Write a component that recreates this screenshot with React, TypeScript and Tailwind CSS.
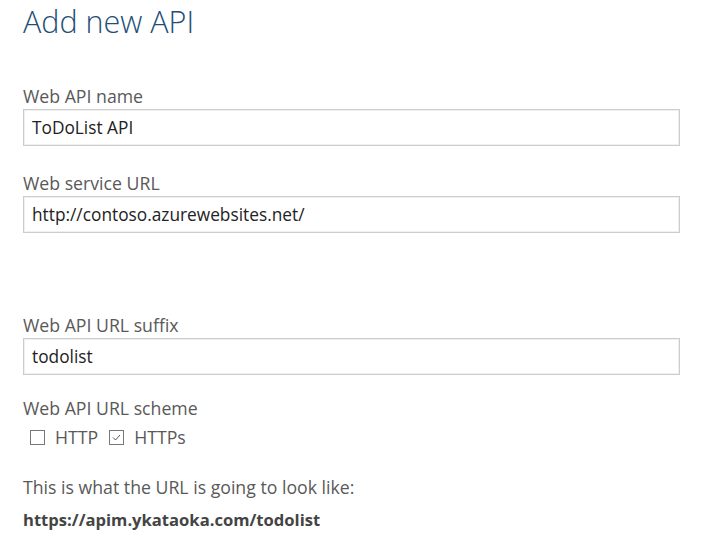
export default function App() {
    return (
        <div className="min-h-[548px] w-[706px] bg-white pl-[23px] pr-[26px] font-['Segoe_UI','Open_Sans',sans-serif] text-[#595959]">
            <h1 className="text-[30.5px] font-light leading-[43px] text-[#1f4e79]">Add new API</h1>

            <div className="mt-[41px] flex flex-col">
                <label className="text-[17.7px] leading-[24px]">Web API name</label>
                <div className="mt-[1px] flex h-[37px] items-center border border-[#cccccc] pl-[8px] text-[17.3px] text-[#222] shadow-[inset_0_0_0_1px_#f0f0f0]">
                    ToDoList API
                </div>
            </div>

            <div className="mt-[25px] flex flex-col">
                <label className="text-[17.7px] leading-[24px]">Web service URL</label>
                <div className="mt-[1px] flex h-[37px] items-center border border-[#cccccc] pl-[8px] text-[17.3px] text-[#222] shadow-[inset_0_0_0_1px_#f0f0f0]">
                    http://contoso.azurewebsites.net/
                </div>
            </div>

            <div className="mt-[80px] flex flex-col">
                <label className="text-[17.7px] leading-[24px]">Web API URL suffix</label>
                <div className="mt-[1px] flex h-[37px] items-center border border-[#cccccc] pl-[8px] text-[17.3px] text-[#222] shadow-[inset_0_0_0_1px_#f0f0f0]">
                    todolist
                </div>
            </div>

            <div className="mt-[21px] flex flex-col">
                <label className="text-[17.7px] leading-[24px]">Web API URL scheme</label>
                <div className="mt-[5px] flex h-[24px] items-center gap-[10px] pl-[7px] text-[17.7px]">
                    <span className="h-[15px] w-[15px] border border-[#777]" />
                    <span>HTTP</span>
                    <span className="ml-[1px] flex h-[15px] w-[15px] items-center justify-center border border-[#777]">
                        <svg width="11" height="9" viewBox="0 0 11 9">
                            <path d="M2 4.5 L4.5 7 L9 2" fill="none" stroke="#555" strokeWidth="1" />
                        </svg>
                    </span>
                    <span>HTTPs</span>
                </div>
            </div>

            <p className="mt-[26px] text-[17.7px] leading-[24px]">This is what the URL is going to look like:</p>
            <p className="mt-[9px] text-[16.6px] font-bold leading-[24px] text-[#444]">https://apim.ykataoka.com/todolist</p>
        </div>
    );
}
